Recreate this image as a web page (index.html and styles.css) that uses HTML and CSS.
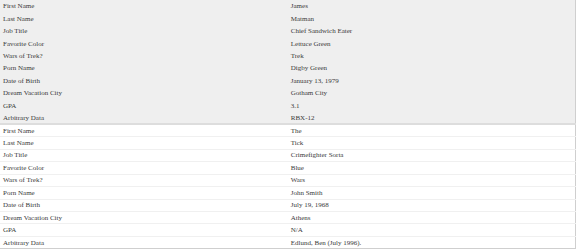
FILE: index.html
```html
<!DOCTYPE html>
<html>
<head>
<meta charset="utf-8">
<link rel="stylesheet" href="styles.css">
</head>
<body>
<table class="data">
  <tbody class="grp grp-a">
    <tr><td>First Name</td><td>James</td></tr>
    <tr><td>Last Name</td><td>Matman</td></tr>
    <tr><td>Job Title</td><td>Chief Sandwich Eater</td></tr>
    <tr><td>Favorite Color</td><td>Lettuce Green</td></tr>
    <tr><td>Wars of Trek?</td><td>Trek</td></tr>
    <tr><td>Porn Name</td><td>Digby Green</td></tr>
    <tr><td>Date of Birth</td><td>January 13, 1979</td></tr>
    <tr><td>Dream Vacation City</td><td>Gotham City</td></tr>
    <tr><td>GPA</td><td>3.1</td></tr>
    <tr><td>Arbitrary Data</td><td>RBX-12</td></tr>
  </tbody>
  <tbody class="grp grp-b">
    <tr><td>First Name</td><td>The</td></tr>
    <tr><td>Last Name</td><td>Tick</td></tr>
    <tr><td>Job Title</td><td>Crimefighter Sorta</td></tr>
    <tr><td>Favorite Color</td><td>Blue</td></tr>
    <tr><td>Wars of Trek?</td><td>Wars</td></tr>
    <tr><td>Porn Name</td><td>John Smith</td></tr>
    <tr><td>Date of Birth</td><td>July 19, 1968</td></tr>
    <tr><td>Dream Vacation City</td><td>Athens</td></tr>
    <tr><td>GPA</td><td>N/A</td></tr>
    <tr><td>Arbitrary Data</td><td>Edlund, Ben (July 1996).</td></tr>
  </tbody>
</table>
</body>
</html>
```
FILE: styles.css
```css
html, body {
  margin: 0;
  padding: 0;
  background: #ffffff;
}
.data {
  width: 576px;
  border-collapse: collapse;
  table-layout: fixed;
  font-family: "Liberation Serif", serif;
  font-size: 7px;
  color: #3a3a3a;
  border-right: 1px solid #cfcfcf;
  border-bottom: 1px solid #cfcfcf;
}
.data td {
  height: 12.45px;
  padding: 0 3px;
  box-sizing: border-box;
  vertical-align: middle;
  white-space: nowrap;
  line-height: 8px;
}
.grp-a tr {
  background: #efefef;
}
.grp-b tr {
  background: #ffffff;
  border-top: 1px solid #f0f0f0;
}
.grp-b tr:first-child {
  border-top: 2px solid #dddddd;
}
```
